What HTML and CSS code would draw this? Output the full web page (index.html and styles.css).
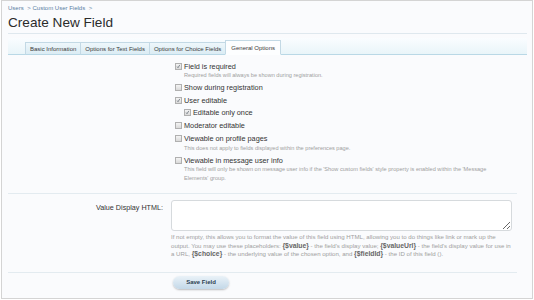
FILE: index.html
```html
<!DOCTYPE html>
<html lang="en">
<head>
    <meta charset="UTF-8">
    <title>Create New Field</title>
    <link rel="stylesheet" href="styles.css">
</head>
<body>
    <div class="page">
        <div class="breadcrumb">
            <a href="#">Users</a> &gt;
            <a href="#">Custom User Fields</a> &gt;
        </div>
        <h1 class="title">Create New Field</h1>

        <div class="tab-bar">
            <ul class="tabs">
                <li>Basic Information</li>
                <li>Options for Text Fields</li>
                <li>Options for Choice Fields</li>
                <li class="active">General Options</li>
            </ul>
        </div>

        <form class="form">
            <div class="section">
                <div class="ctrl-unit">
                    <div class="ctrl-label"></div>
                    <div class="ctrl-input">
                        <ul class="checks">
                            <li>
                                <label><span class="box checked"><svg viewBox="0 0 7 7"><path d="M1.6 3.6 L2.8 5.2 L5.4 1.2"/></svg></span>Field is required</label>
                                <p class="hint">Required fields will always be shown during registration.</p>
                            </li>
                            <li>
                                <label><span class="box"></span>Show during registration</label>
                            </li>
                            <li>
                                <label><span class="box checked"><svg viewBox="0 0 7 7"><path d="M1.6 3.6 L2.8 5.2 L5.4 1.2"/></svg></span>User editable</label>
                                <ul class="checks sub">
                                    <li>
                                        <label><span class="box checked"><svg viewBox="0 0 7 7"><path d="M1.6 3.6 L2.8 5.2 L5.4 1.2"/></svg></span>Editable only once</label>
                                    </li>
                                </ul>
                            </li>
                            <li>
                                <label><span class="box"></span>Moderator editable</label>
                            </li>
                            <li>
                                <label><span class="box"></span>Viewable on profile pages</label>
                                <p class="hint">This does not apply to fields displayed within the preferences page.</p>
                            </li>
                            <li>
                                <label><span class="box"></span>Viewable in message user info</label>
                                <p class="hint">This field will only be shown on message user info if the 'Show custom fields' style property is enabled within the 'Message Elements' group.</p>
                            </li>
                        </ul>
                    </div>
                </div>
            </div>

            <div class="section">
                <div class="ctrl-unit">
                    <label class="ctrl-label text" for="display">Value Display HTML:</label>
                    <div class="ctrl-input">
                        <textarea id="display" class="textbox"></textarea>
                        <p class="explain">If not empty, this allows you to format the value of this field using HTML, allowing you to do things like link or mark up the output. You may use these placeholders: <b>{$value}</b> - the field's display value; <b>{$valueUrl}</b> - the field's display value for use in a URL, <b>{$choice}</b> - the underlying value of the chosen option, and <b>{$fieldId}</b> - the ID of this field ().</p>
                    </div>
                </div>
            </div>

            <div class="submit-unit">
                <button type="submit" class="button">Save Field</button>
            </div>
        </form>
    </div>
</body>
</html>
```

FILE: styles.css
```css
* {
    margin: 0;
    padding: 0;
    box-sizing: border-box;
    font-family: "Liberation Sans", Arial, sans-serif;
}

body {
    background: #ffffff;
}

.page {
    margin-left: 1px;
    width: 532px;
    height: 299px;
    border: 1px solid #d4d4d4;
    background: #fafbfd;
    padding: 0 5px 0 6px;
    color: #333;
}

/* Breadcrumb + title */
.breadcrumb {
    font-size: 6px;
    line-height: 8px;
    padding-top: 3px;
    color: #6b8aa8;
}

.breadcrumb a {
    color: #5a7ea3;
    text-decoration: none;
    margin-right: 2px;
}

.title {
    font-size: 13.6px;
    font-weight: normal;
    line-height: 18px;
    color: #2b2b2b;
    padding-top: 2px;
    padding-bottom: 1px;
    border-bottom: 1px solid #dfe8ee;
}

/* Tabs */
.tab-bar {
    margin-top: 4px;
    height: 17px;
    background: linear-gradient(#fafdff, #e9f5f9);
    border-bottom: 1px solid #b9d8e6;
    display: flex;
    align-items: flex-end;
}

.tabs {
    list-style: none;
    display: flex;
    align-items: flex-end;
    padding-left: 17px;
    margin-bottom: -1px;
}

.tabs li {
    height: 13px;
    padding: 0 4px;
    font-size: 6px;
    line-height: 12px;
    color: #3a3a3a;
    background: linear-gradient(#eef7fb, #dbecf4);
    border: 1px solid #c3d9e5;
    border-bottom: 1px solid #b9d8e6;
    margin-right: -1px;
    white-space: nowrap;
}

.tabs li.active {
    height: 15px;
    line-height: 14px;
    padding: 0 5px;
    background: #fdfeff;
    border-bottom-color: #fdfeff;
    position: relative;
}

/* Form layout */
.form {
    padding-right: 10px;
}

.section {
    border-bottom: 1px solid #e3ebf0;
}

.section:first-child {
    padding-top: 6px;
    padding-bottom: 11px;
}

.section:nth-child(2) {
    padding-top: 6px;
    padding-bottom: 13px;
}

.ctrl-unit {
    display: flex;
    gap: 8px;
}

.ctrl-label {
    width: 155px;
    flex-shrink: 0;
    text-align: right;
}

.ctrl-label.text {
    font-size: 7.2px;
    line-height: 16px;
    color: #333;
}

.ctrl-input {
    width: 341px;
}

/* Checkbox list */
.checks {
    list-style: none;
    padding-left: 4px;
}

.checks > li {
    margin-bottom: 3px;
}

.checks > li:last-child {
    margin-bottom: 0;
}

.checks.sub {
    padding-left: 9px;
    margin-top: 2px;
}

.checks label {
    display: flex;
    align-items: center;
    height: 10px;
    font-size: 7.3px;
    color: #333;
}

.box {
    width: 7px;
    height: 7px;
    margin-right: 2px;
    border: 1px solid #b0b0b0;
    background: linear-gradient(#f4f4f4, #d9d9d9);
    display: inline-flex;
}

.box svg {
    width: 100%;
    height: 100%;
    fill: none;
    stroke: #4a5460;
    stroke-width: 0.9;
}

.hint {
    padding-left: 9px;
    font-size: 5.6px;
    line-height: 8.5px;
    color: #a0a0a0;
}

/* Textarea */
.textbox {
    display: block;
    width: 341px;
    height: 31px;
    border: 1px solid #d6dadd;
    border-radius: 3px;
    background: #fff;
    resize: vertical;
}

.explain {
    width: 342px;
    margin-top: 2px;
    font-size: 6.1px;
    line-height: 8.5px;
    color: #a0a0a0;
}

.explain b {
    font-size: 6.8px;
    color: #666;
}

/* Submit */
.submit-unit {
    display: flex;
    padding: 3px 0 0 165px;
}

.button {
    width: 56px;
    height: 13px;
    border: none;
    border-radius: 7px;
    background: linear-gradient(#eaf2f8, #c3d8e8);
    box-shadow: 0 1px 2px rgba(0, 0, 0, 0.25);
    font-size: 6px;
    font-weight: bold;
    color: #2c3e50;
    cursor: pointer;
}
```
